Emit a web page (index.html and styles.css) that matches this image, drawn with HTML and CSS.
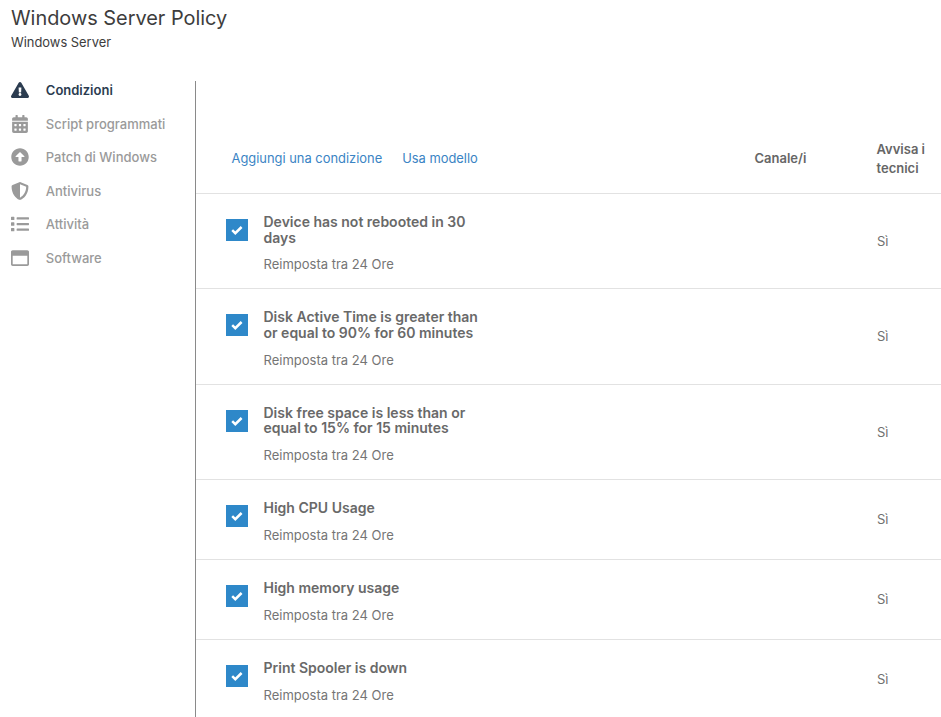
FILE: index.html
```html
<!DOCTYPE html>
<html lang="it">
<head>
<meta charset="utf-8">
<title>Windows Server Policy</title>
<link rel="stylesheet" href="styles.css">
</head>
<body>
<header class="page-head">
  <h1 class="page-title">Windows Server Policy</h1>
  <div class="page-sub">Windows Server</div>
</header>
<div class="layout">
  <nav class="side">
    <a class="nav-item active">
      <svg class="nav-icon" viewBox="0 0 576 512"><path fill="currentColor" fill-rule="evenodd" d="M569.500 440 329.600 24c-18.400-32-64.700-32-83.200 0L6.500 440c-18.400 31.900 4.600 72 41.600 72h479.800c36.900 0 60-40 41.600-72zM288 354c-25.400 0-46 20.600-46 46s20.600 46 46 46 46-20.600 46-46-20.600-46-46-46zm-43.700-165.400 7.400 136c.3 6.400 5.600 11.400 12 11.400h48.500c6.400 0 11.600-5 12-11.400l7.400-136c.4-6.900-5.100-12.600-12-12.600h-63.900c-6.900 0-12.300 5.700-11.900 12.600z"/></svg>
      <span>Condizioni</span>
    </a>
    <a class="nav-item">
      <svg class="nav-icon" viewBox="0 0 448 512"><path fill="currentColor" d="M0 464c0 26.500 21.500 48 48 48h352c26.500 0 48-21.500 48-48V192H0v272zm320-196c0-6.600 5.400-12 12-12h40c6.600 0 12 5.400 12 12v40c0 6.600-5.400 12-12 12h-40c-6.600 0-12-5.400-12-12v-40zm0 128c0-6.600 5.400-12 12-12h40c6.600 0 12 5.400 12 12v40c0 6.600-5.400 12-12 12h-40c-6.600 0-12-5.400-12-12v-40zM192 268c0-6.600 5.400-12 12-12h40c6.600 0 12 5.400 12 12v40c0 6.600-5.400 12-12 12h-40c-6.600 0-12-5.400-12-12v-40zm0 128c0-6.600 5.400-12 12-12h40c6.600 0 12 5.400 12 12v40c0 6.600-5.400 12-12 12h-40c-6.600 0-12-5.400-12-12v-40zM64 268c0-6.600 5.400-12 12-12h40c6.600 0 12 5.400 12 12v40c0 6.600-5.400 12-12 12H76c-6.600 0-12-5.400-12-12v-40zm0 128c0-6.600 5.400-12 12-12h40c6.600 0 12 5.400 12 12v40c0 6.600-5.400 12-12 12H76c-6.600 0-12-5.400-12-12v-40zM400 64h-48V16c0-8.800-7.200-16-16-16h-32c-8.800 0-16 7.200-16 16v48H160V16c0-8.800-7.200-16-16-16h-32c-8.800 0-16 7.200-16 16v48H48C21.500 64 0 85.500 0 112v48h448v-48c0-26.500-21.500-48-48-48z"/></svg>
      <span>Script programmati</span>
    </a>
    <a class="nav-item">
      <svg class="nav-icon" viewBox="0 0 512 512"><path fill="currentColor" d="M8 256C8 119 119 8 256 8s248 111 248 248-111 248-248 248S8 393 8 256zm292 116V256h70.900c10.700 0 16.100-13 8.500-20.500L264.500 121.200c-4.700-4.700-12.200-4.700-16.900 0l-115 114.300c-7.600 7.600-2.200 20.500 8.500 20.500H212v116c0 6.600 5.400 12 12 12h64c6.600 0 12-5.400 12-12z"/></svg>
      <span>Patch di Windows</span>
    </a>
    <a class="nav-item">
      <svg class="nav-icon" viewBox="0 0 512 512"><path fill="currentColor" d="M466.500 83.700l-192-80a48.150 48.150 0 0 0-36.900 0l-192 80C27.700 91.100 16 108.600 16 128c0 198.500 114.500 335.700 221.500 380.300 11.800 4.900 25.100 4.900 36.900 0C360.100 472.600 496 349.300 496 128c0-19.400-11.700-36.900-29.500-44.300zM256.100 446.300l-.1-381 175.900 73.300c-3.300 151.400-82.100 261.100-175.800 307.700z"/></svg>
      <span>Antivirus</span>
    </a>
    <a class="nav-item">
      <svg class="nav-icon" viewBox="0 0 512 512"><path fill="currentColor" d="M80 368H16a16 16 0 0 0-16 16v64a16 16 0 0 0 16 16h64a16 16 0 0 0 16-16v-64a16 16 0 0 0-16-16zm0-320H16A16 16 0 0 0 0 64v64a16 16 0 0 0 16 16h64a16 16 0 0 0 16-16V64a16 16 0 0 0-16-16zm0 160H16a16 16 0 0 0-16 16v64a16 16 0 0 0 16 16h64a16 16 0 0 0 16-16v-64a16 16 0 0 0-16-16zm416 176H176a16 16 0 0 0-16 16v32a16 16 0 0 0 16 16h320a16 16 0 0 0 16-16v-32a16 16 0 0 0-16-16zm0-320H176a16 16 0 0 0-16 16v32a16 16 0 0 0 16 16h320a16 16 0 0 0 16-16V80a16 16 0 0 0-16-16zm0 160H176a16 16 0 0 0-16 16v32a16 16 0 0 0 16 16h320a16 16 0 0 0 16-16v-32a16 16 0 0 0-16-16z"/></svg>
      <span>Attività</span>
    </a>
    <a class="nav-item">
      <svg class="nav-icon" viewBox="0 0 512 512"><path fill="currentColor" d="M464 32H48C21.500 32 0 53.500 0 80v352c0 26.500 21.500 48 48 48h416c26.500 0 48-21.500 48-48V80c0-26.500-21.500-48-48-48zm-6 400H54c-3.300 0-6-2.700-6-6V192h416v234c0 3.300-2.700 6-6 6z"/></svg>
      <span>Software</span>
    </a>
  </nav>
  <main class="content">
    <div class="table-head">
      <div class="head-links">
        <a class="link">Aggiungi una condizione</a>
        <a class="link">Usa modello</a>
      </div>
      <div class="col-channel head-label">Canale/i</div>
      <div class="col-notify head-label">Avvisa i tecnici</div>
    </div>

    <div class="row row-tall">
      <span class="check"><svg viewBox="0 0 22 22"><path d="M6.200 11.200l3.100 3 6.300-6.200"/></svg></span>
      <div class="cond">
        <div class="cond-title">Device has not rebooted in 30 days</div>
        <div class="cond-reset">Reimposta tra 24 Ore</div>
      </div>
      <div class="col-channel"></div>
      <div class="col-notify">Sì</div>
    </div>
    <div class="row row-tall">
      <span class="check"><svg viewBox="0 0 22 22"><path d="M6.200 11.200l3.100 3 6.300-6.200"/></svg></span>
      <div class="cond">
        <div class="cond-title">Disk Active Time is greater than or equal to 90% for 60 minutes</div>
        <div class="cond-reset">Reimposta tra 24 Ore</div>
      </div>
      <div class="col-channel"></div>
      <div class="col-notify">Sì</div>
    </div>
    <div class="row row-tall">
      <span class="check"><svg viewBox="0 0 22 22"><path d="M6.200 11.200l3.100 3 6.300-6.200"/></svg></span>
      <div class="cond">
        <div class="cond-title">Disk free space is less than or equal to 15% for 15 minutes</div>
        <div class="cond-reset">Reimposta tra 24 Ore</div>
      </div>
      <div class="col-channel"></div>
      <div class="col-notify">Sì</div>
    </div>
    <div class="row">
      <span class="check"><svg viewBox="0 0 22 22"><path d="M6.200 11.200l3.100 3 6.300-6.200"/></svg></span>
      <div class="cond">
        <div class="cond-title">High CPU Usage</div>
        <div class="cond-reset">Reimposta tra 24 Ore</div>
      </div>
      <div class="col-channel"></div>
      <div class="col-notify">Sì</div>
    </div>
    <div class="row">
      <span class="check"><svg viewBox="0 0 22 22"><path d="M6.200 11.200l3.100 3 6.300-6.200"/></svg></span>
      <div class="cond">
        <div class="cond-title">High memory usage</div>
        <div class="cond-reset">Reimposta tra 24 Ore</div>
      </div>
      <div class="col-channel"></div>
      <div class="col-notify">Sì</div>
    </div>
    <div class="row">
      <span class="check"><svg viewBox="0 0 22 22"><path d="M6.200 11.200l3.100 3 6.300-6.200"/></svg></span>
      <div class="cond">
        <div class="cond-title">Print Spooler is down</div>
        <div class="cond-reset">Reimposta tra 24 Ore</div>
      </div>
      <div class="col-channel"></div>
      <div class="col-notify">Sì</div>
    </div>
  </main>
</div>
</body>
</html>
```
FILE: styles.css
```css
* { box-sizing: border-box; }
body {
  margin: 0;
  height: 717px;
  overflow: hidden;
  background: #fff;
  font-family: Inter, "Liberation Sans", sans-serif;
  color: #666;
}
.page-head { height: 81px; padding: 6px 0 0 11px; }
.page-title {
  margin: 0;
  font-size: 19.900px;
  font-weight: 400;
  line-height: 24px;
  color: #3d3d3d;
}
.page-sub {
  margin-top: 4px;
  font-size: 12.900px;
  line-height: 18px;
  color: #3d3d3d;
}
.layout { display: flex; height: 636px; }
.side {
  display: flex;
  flex-direction: column;
  gap: 15.500px;
  width: 196px;
  flex: none;
  border-right: 1px solid #8a8a8a;
  padding-left: 11px;
}
.nav-item {
  display: flex;
  align-items: center;
  height: 18px;
  gap: 16.800px;
  font-size: 13px;
  font-weight: 500;
  color: #9a9a9a;
}
.nav-item.active { color: #2b3c50; font-weight: 600; }
.nav-icon { width: 18px; height: 18px; flex: none; }
.content { flex: 1; min-width: 0; }
.table-head {
  display: flex;
  align-items: center;
  height: 113px;
  padding: 42px 0 0 35.500px;
  border-bottom: 1px solid #e2e2e2;
}
.head-links { display: flex; gap: 20px; width: 523px; flex: none; }
.link { font-size: 12.900px; color: #3a84c4; }
.head-label { margin-top: 2px; font-size: 13px; font-weight: 600; line-height: 19.500px; color: #666; }
.col-channel { width: 122px; flex: none; }
.col-notify { width: 58px; flex: none; align-self: center; font-size: 13px; color: #707070; }
.head-label.col-notify { font-size: 13px; color: #666; }
.row {
  display: flex;
  align-items: flex-start;
  height: 80px;
  padding-left: 30px;
  border-bottom: 1px solid #e2e2e2;
}
.row-tall { height: 95.340px; }
.check {
  width: 22px;
  height: 22px;
  flex: none;
  background: #2e88c9;
  margin-top: 25px;
}
.check svg { display: block; width: 22px; height: 22px; fill: none; stroke: #fff; stroke-width: 2.500; }
.cond { width: 507px; flex: none; padding: 20px 0 0 15.500px; }
.cond-title { font-size: 14px; font-weight: 600; line-height: 15.750px; color: #696969; width: 225px; }
.cond-reset { margin-top: 10.800px; font-size: 13px; line-height: 16px; color: #757575; white-space: nowrap; }
```
